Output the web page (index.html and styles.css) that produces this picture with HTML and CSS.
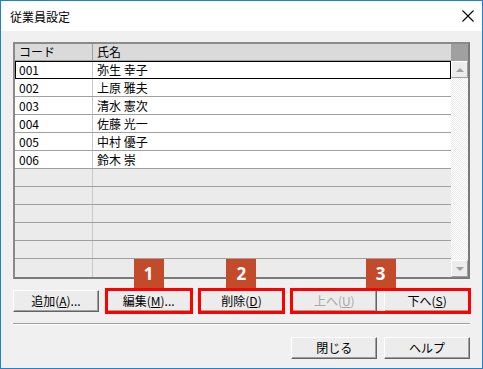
FILE: index.html
```html
<!DOCTYPE html>
<html>
	<head>
		<title>従業員設定</title>
		<meta charset="UTF-8">
		<link rel="stylesheet" href="styles.css">
	</head>
	<body>
		<div class="window">
			<div class="titlebar">
				<span class="title">従業員設定</span>
				<svg class="close" width="12" height="12" viewBox="0 0 12 12">
					<path d="M0.5 0.5 L11.5 11.5 M11.5 0.5 L0.5 11.5" stroke="#000" stroke-width="1.1" fill="none"/>
				</svg>
			</div>
			<div class="content">
				<div class="list">
					<div class="head">
						<div class="code">コード</div>
						<div class="name">氏名</div>
						<div class="corner"></div>
					</div>
					<div class="body">
						<div class="rows">
							<div class="row data selected"><div class="code">001</div><div class="name">弥生 幸子</div></div>
							<div class="row data"><div class="code">002</div><div class="name">上原 雅夫</div></div>
							<div class="row data"><div class="code">003</div><div class="name">清水 憲次</div></div>
							<div class="row data"><div class="code">004</div><div class="name">佐藤 光一</div></div>
							<div class="row data"><div class="code">005</div><div class="name">中村 優子</div></div>
							<div class="row data"><div class="code">006</div><div class="name">鈴木 崇</div></div>
							<div class="row"><div class="code"></div><div class="name"></div></div>
							<div class="row"><div class="code"></div><div class="name"></div></div>
							<div class="row"><div class="code"></div><div class="name"></div></div>
							<div class="row"><div class="code"></div><div class="name"></div></div>
							<div class="row"><div class="code"></div><div class="name"></div></div>
							<div class="row last"><div class="code"></div><div class="name"></div></div>
						</div>
						<div class="scroll">
							<div class="sbtn"><span class="arrowUp"></span></div>
							<div class="track"></div>
							<div class="sbtn"><span class="arrowDown"></span></div>
						</div>
					</div>
				</div>

				<div class="buttons">
					<div class="btn">追加(<u>A</u>)...</div>
					<div class="mark">
						<div class="btn">編集(<u>M</u>)...</div>
						<span class="ring"></span>
						<span class="badge">1</span>
					</div>
					<div class="mark">
						<div class="btn">削除(<u>D</u>)</div>
						<span class="ring"></span>
						<span class="badge">2</span>
					</div>
					<div class="mark pair">
						<div class="btn disabled">上へ(<u>U</u>)</div>
						<div class="btn">下へ(<u>S</u>)</div>
						<span class="ring"></span>
						<span class="badge">3</span>
					</div>
				</div>

				<div class="separator"></div>

				<div class="buttons bottom">
					<div class="btn">閉じる</div>
					<div class="btn">ヘルプ</div>
				</div>
			</div>
		</div>
	</body>
</html>
```

FILE: styles.css
```css
body{
	margin: 0;
	font-family: "Noto Sans CJK JP", "Noto Sans", sans-serif;
	font-size: 12px;
	color: #000;
}
.window{
	width: 483px;
	height: 369px;
	box-sizing: border-box;
	border: 1px solid #1883d7;
	background-color: #f0f0f0;
	display: flex;
	flex-direction: column;
}
.titlebar{
	height: 30px;
	background-color: #fff;
	display: flex;
	align-items: center;
	justify-content: space-between;
	padding: 0 8px 0 9px;
}
.title{
	font-size: 12px;
	color: #000;
}
.content{
	padding: 11px 12px 0 12px;
}
.list{
	height: 237px;
	box-sizing: border-box;
	border: 2px solid #8a8a8a;
	border-right-color: #7a7a7a;
	border-bottom-color: #7a7a7a;
	display: flex;
	flex-direction: column;
	background-color: #ebebeb;
}
.head{
	display: flex;
	height: 17px;
	box-sizing: border-box;
	background-color: #dadada;
	border-bottom: 1px solid #a0a0a0;
}
.head .code, .head .name{
	line-height: 16px;
	padding-left: 4px;
}
.code{
	width: 78px;
	flex-shrink: 0;
	box-sizing: border-box;
	padding-left: 4px;
	border-right: 1px solid #c8c8c8;
}
.head .code{
	border-right-color: #a0a0a0;
}
.name{
	flex: 1;
	padding-left: 4px;
}
.corner{
	width: 17px;
	background-color: #a0a0a0;
}
.body{
	flex: 1;
	display: flex;
}
.rows{
	flex: 1;
}
.row{
	display: flex;
	height: 18px;
	box-sizing: border-box;
	border-bottom: 1px solid #a0a0a0;
	line-height: 17px;
}
.row.last{
	border-bottom: none;
}
.row.data{
	background-color: #fff;
}
.row.selected{
	outline: 1px solid #000;
	outline-offset: -1px;
}
.scroll{
	width: 17px;
	display: flex;
	flex-direction: column;
	background-color: #f4f4f4;
	background-image: repeating-conic-gradient(#fff 0 25%, #ebebeb 0 50%);
	background-size: 2px 2px;
}
.track{
	flex: 1;
}
.sbtn{
	height: 17px;
	box-sizing: border-box;
	background-color: #ececec;
	border: 1px solid;
	border-color: #fff #a0a0a0 #a0a0a0 #fff;
	display: flex;
	align-items: center;
	justify-content: center;
}
.arrowUp{
	width: 0;
	height: 0;
	border-left: 4px solid transparent;
	border-right: 4px solid transparent;
	border-bottom: 4px solid #a0a0a0;
}
.arrowDown{
	width: 0;
	height: 0;
	border-left: 4px solid transparent;
	border-right: 4px solid transparent;
	border-top: 4px solid #a0a0a0;
}
.buttons{
	display: grid;
	grid-template-columns: repeat(5, 1fr);
	column-gap: 7px;
	margin-top: 11px;
}
.btn{
	height: 22px;
	box-sizing: border-box;
	background-color: #ececec;
	border: 1px solid;
	border-color: #fff #646464 #646464 #fff;
	box-shadow: inset -1px -1px 0 #a0a0a0;
	text-align: center;
	line-height: 20px;
	font-size: 12px;
}
.btn.disabled{
	color: #a6a6a6;
}
.mark{
	position: relative;
}
.mark.pair{
	grid-column: span 2;
	display: grid;
	grid-template-columns: 1fr 1fr;
	column-gap: 7px;
}
.ring{
	position: absolute;
	top: -2px;
	bottom: -2px;
	left: -1px;
	right: -1px;
	border: 3px solid #ff0000;
}
.badge{
	position: absolute;
	bottom: calc(100% + 2px);
	left: 50%;
	margin-left: -15px;
	width: 30px;
	height: 29px;
	background-color: #c44b2a;
	color: #fff;
	font-family: "Noto Sans", sans-serif;
	font-weight: bold;
	font-size: 17px;
	line-height: 29px;
	text-align: center;
}
.separator{
	margin-top: 11px;
	border-top: 1px solid #a0a0a0;
	border-bottom: 1px solid #fff;
}
.buttons.bottom{
	margin-top: 12px;
}
.buttons.bottom .btn:first-child{
	grid-column: 4;
}
```
